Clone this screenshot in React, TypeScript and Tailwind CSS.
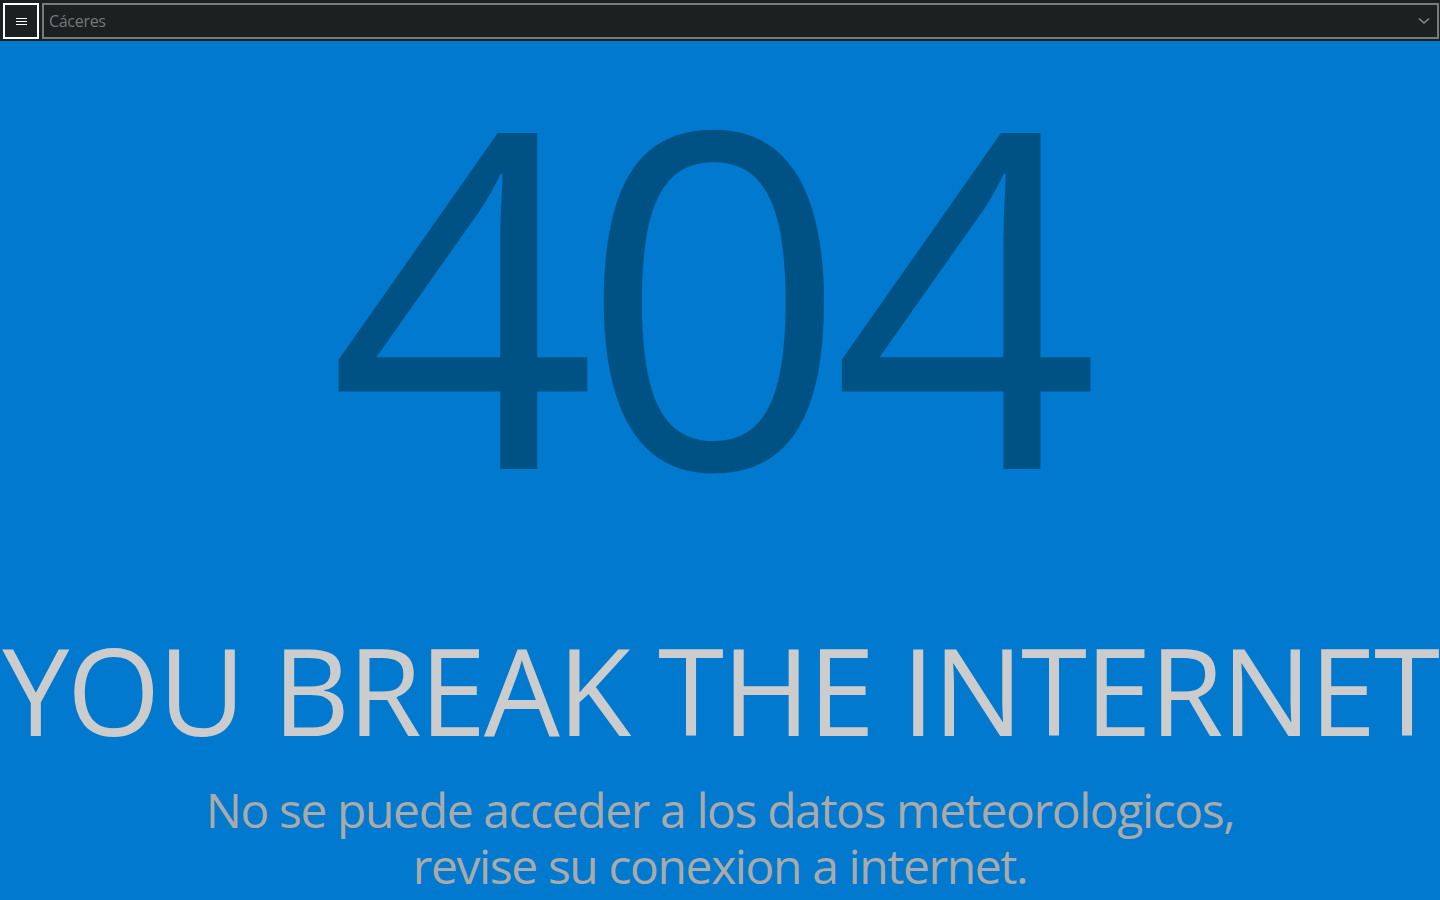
import React from "react";

export default function App() {
  return (
    <div className="w-[1440px] h-[900px] overflow-hidden bg-[#0079ce] flex flex-col" style={{ fontFamily: '"Open Sans", "Noto Sans", sans-serif' }}>
      <div className="h-[41px] bg-[#1b2020] flex items-start pt-[3px] pl-[3px] pr-[1px] gap-[3px] shrink-0">
        <button className="w-[36px] h-[36px] border-2 border-white flex flex-col items-center justify-center gap-[2px]">
          <span className="block w-[11px] h-[1px] bg-white" />
          <span className="block w-[11px] h-[1px] bg-white" />
          <span className="block w-[11px] h-[1px] bg-white" />
        </button>
        <div className="flex-1 h-[36px] border-2 border-[#7a7a7a] flex items-center justify-between pl-[5px] pr-[7px]">
          <span className="text-[16px] text-[#777777] leading-none tracking-[-0.3px]">Cáceres</span>
          <svg width="12" height="8" viewBox="0 0 12 8" fill="none">
            <path d="M1 1.5 L6 6 L11 1.5" stroke="#8a8a8a" strokeWidth="1.6" />
          </svg>
        </div>
      </div>
      <div className="flex flex-col items-center">
        <div className="text-[468px] leading-[468px] text-[#005285] mt-[13px] h-[500px] tracking-[-16px] mr-[28px]">404</div>
        <div className="text-[120px] leading-[120px] text-[#cccccc] whitespace-nowrap mt-[76px] tracking-[-2.2px]">YOU BREAK THE INTERNET</div>
        <div className="text-[48px] leading-[56px] text-[#aaaaaa] text-center mt-[32px] tracking-[-1.4px]">
          No se puede acceder a los datos meteorologicos,<br />revise su conexion a internet.
        </div>
      </div>
    </div>
  );
}
